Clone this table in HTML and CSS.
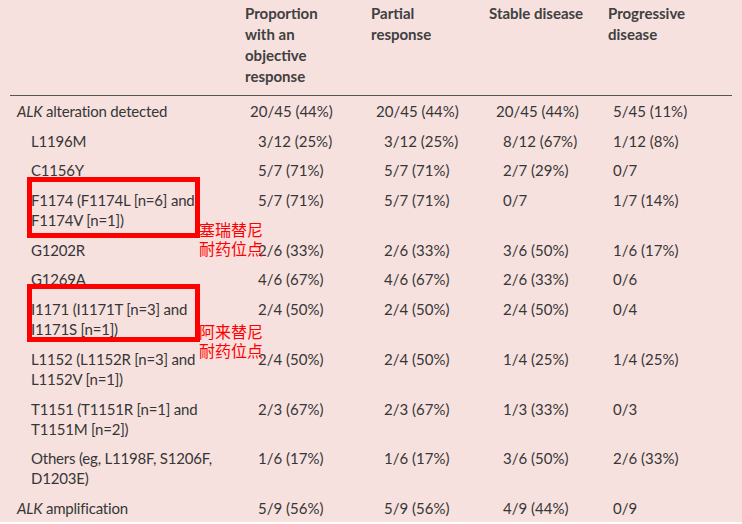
FILE: index.html
```html
<!DOCTYPE html>
<html lang="en">
<head>
<meta charset="utf-8">
<title>ALK alterations response table</title>
<link rel="stylesheet" href="styles.css">
</head>
<body>
<div class="page">
  <div class="table">
    <div class="row head">
      <div class="cell"></div>
      <div class="cell hc">Proportion<br>with an<br>objective<br>response</div>
      <div class="cell hc">Partial<br>response</div>
      <div class="cell hc">Stable disease</div>
      <div class="cell hc">Progressive<br>disease</div>
    </div>
    <div class="row">
      <div class="cell name"><i>ALK</i> alteration detected</div>
      <div class="cell c2 wide">20/45 (44%)</div>
      <div class="cell c3 wide">20/45 (44%)</div>
      <div class="cell c4 wide">20/45 (44%)</div>
      <div class="cell c5">5/45 (11%)</div>
    </div>
    <div class="row">
      <div class="cell name sub">L1196M</div>
      <div class="cell c2">3/12 (25%)</div>
      <div class="cell c3">3/12 (25%)</div>
      <div class="cell c4">8/12 (67%)</div>
      <div class="cell c5">1/12 (8%)</div>
    </div>
    <div class="row">
      <div class="cell name sub">C1156Y</div>
      <div class="cell c2">5/7 (71%)</div>
      <div class="cell c3">5/7 (71%)</div>
      <div class="cell c4">2/7 (29%)</div>
      <div class="cell c5">0/7</div>
    </div>
    <div class="row">
      <div class="cell name sub">F1174 (F1174L [n=6] and<br>F1174V [n=1])</div>
      <div class="cell c2">5/7 (71%)</div>
      <div class="cell c3">5/7 (71%)</div>
      <div class="cell c4">0/7</div>
      <div class="cell c5">1/7 (14%)</div>
    </div>
    <div class="row">
      <div class="cell name sub">G1202R</div>
      <div class="cell c2">2/6 (33%)</div>
      <div class="cell c3">2/6 (33%)</div>
      <div class="cell c4">3/6 (50%)</div>
      <div class="cell c5">1/6 (17%)</div>
    </div>
    <div class="row">
      <div class="cell name sub">G1269A</div>
      <div class="cell c2">4/6 (67%)</div>
      <div class="cell c3">4/6 (67%)</div>
      <div class="cell c4">2/6 (33%)</div>
      <div class="cell c5">0/6</div>
    </div>
    <div class="row">
      <div class="cell name sub">I1171 (I1171T [n=3] and<br>I1171S [n=1])</div>
      <div class="cell c2">2/4 (50%)</div>
      <div class="cell c3">2/4 (50%)</div>
      <div class="cell c4">2/4 (50%)</div>
      <div class="cell c5">0/4</div>
    </div>
    <div class="row">
      <div class="cell name sub">L1152 (L1152R [n=3] and<br>L1152V [n=1])</div>
      <div class="cell c2">2/4 (50%)</div>
      <div class="cell c3">2/4 (50%)</div>
      <div class="cell c4">1/4 (25%)</div>
      <div class="cell c5">1/4 (25%)</div>
    </div>
    <div class="row">
      <div class="cell name sub">T1151 (T1151R [n=1] and<br>T1151M [n=2])</div>
      <div class="cell c2">2/3 (67%)</div>
      <div class="cell c3">2/3 (67%)</div>
      <div class="cell c4">1/3 (33%)</div>
      <div class="cell c5">0/3</div>
    </div>
    <div class="row">
      <div class="cell name sub">Others (eg, L1198F, S1206F,<br>D1203E)</div>
      <div class="cell c2">1/6 (17%)</div>
      <div class="cell c3">1/6 (17%)</div>
      <div class="cell c4">3/6 (50%)</div>
      <div class="cell c5">2/6 (33%)</div>
    </div>
    <div class="row">
      <div class="cell name"><i>ALK</i> amplification</div>
      <div class="cell c2">5/9 (56%)</div>
      <div class="cell c3">5/9 (56%)</div>
      <div class="cell c4">4/9 (44%)</div>
      <div class="cell c5">0/9</div>
    </div>
  </div>

  <div class="mark mark-1"></div>
  <div class="note note-1">塞瑞替尼<br>耐药位点</div>
  <div class="mark mark-2"></div>
  <div class="note note-2">阿来替尼<br>耐药位点</div>
</div>
</body>
</html>
```

FILE: styles.css
```css
html, body {
  margin: 0;
  padding: 0;
  background: #ffffff;
}

.page {
  position: relative;
  width: 742px;
  height: 522px;
  background: #f6e1df;
  overflow: hidden;
  font-family: "Lato", "Liberation Sans", sans-serif;
  font-size: 15px;
  color: #363636;
}

.table {
  margin-left: 10px;
  width: 722px;
}

.row {
  display: grid;
  grid-template-columns: 235px 126px 118px 119px 124px;
  line-height: 20px;
  padding: 5px 0 4.7px;
}

.row.head {
  line-height: 21px;
  padding: 3px 0 8px;
  border-bottom: 1.5px solid #555555;
  font-weight: bold;
  color: #404040;
}

.cell {
  white-space: nowrap;
}

.name {
  padding-left: 7px;
  letter-spacing: -0.2px;
}

.name.sub {
  padding-left: 21px;
}

.c2 { padding-left: 13px; }
.c3 { padding-left: 13px; }
.c4 { padding-left: 14px; }
.c5 { padding-left: 5px; }

.c2.wide { padding-left: 5px; }
.c3.wide { padding-left: 5px; }
.c4.wide { padding-left: 7px; }

.mark {
  position: absolute;
  left: 27px;
  width: 163px;
  border: 5px solid #ff0000;
}

.mark-1 {
  top: 177px;
  height: 51px;
}

.mark-2 {
  top: 284px;
  height: 48px;
}

.note {
  position: absolute;
  left: 199px;
  font-family: "Noto Sans CJK SC", sans-serif;
  font-size: 16px;
  line-height: 19px;
  color: #ff0000;
}

.note-1 { top: 220px; }
.note-2 { top: 322px; }
```
